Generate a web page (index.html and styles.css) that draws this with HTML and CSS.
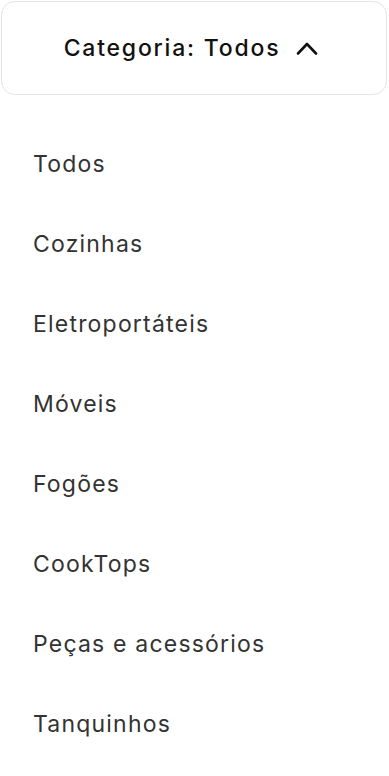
FILE: index.html
```html
<!DOCTYPE html>
<html lang="pt-BR">
<head>
    <meta charset="UTF-8">
    <meta name="viewport" content="width=device-width, initial-scale=1.0">
    <title>Categorias</title>
    <link rel="stylesheet" href="styles.css">
</head>
<body>
    <div class="filter">
        <button class="filter-toggle" type="button">
            <span class="filter-label">Categoria: Todos</span>
            <svg class="chevron" width="22" height="15" viewBox="0 0 22 15" aria-hidden="true">
                <path d="M2 12.5 L11 3 L20 12.5" fill="none" stroke="#111" stroke-width="2.6" stroke-linecap="round" stroke-linejoin="round"/>
            </svg>
        </button>

        <ul class="category-list">
            <li class="category-item">Todos</li>
            <li class="category-item">Cozinhas</li>
            <li class="category-item">Eletroportáteis</li>
            <li class="category-item">Móveis</li>
            <li class="category-item">Fogões</li>
            <li class="category-item">CookTops</li>
            <li class="category-item">Peças e acessórios</li>
            <li class="category-item">Tanquinhos</li>
        </ul>
    </div>
</body>
</html>
```

FILE: styles.css
```css
* {
    margin: 0;
    padding: 0;
    box-sizing: border-box;
}

body {
    font-family: Inter, 'Noto Sans', sans-serif;
    background: #ffffff;
    color: #333333;
}

.filter {
    width: 389px;
    padding: 1px 2px 0 1px;
}

.filter-toggle {
    width: 100%;
    height: 94px;
    display: flex;
    align-items: center;
    justify-content: center;
    gap: 16px;
    background: #ffffff;
    border: 1px solid #e4e4e4;
    border-radius: 14px;
    font-family: inherit;
    font-size: 23px;
    font-weight: 500;
    letter-spacing: 1.8px;
    color: #111111;
    padding: 0 6px 0 0;
}

.chevron {
    display: block;
}

.category-list {
    list-style: none;
    padding: 56px 0 0 32px;
}

.category-item {
    height: 80px;
    font-size: 23px;
    line-height: 26px;
    letter-spacing: 1.2px;
    color: #333333;
}
```
